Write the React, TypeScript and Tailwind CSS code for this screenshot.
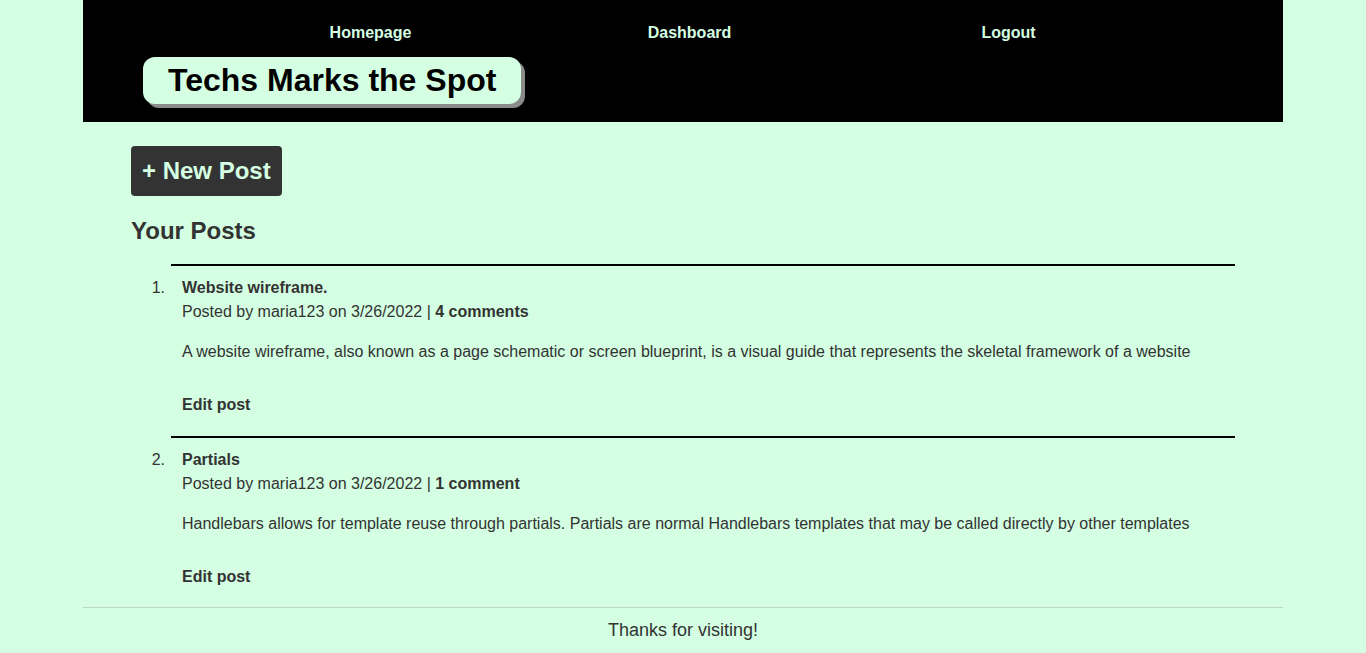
import React from 'react';

const posts = [
  {
    title: 'Website wireframe.',
    author: 'maria123',
    date: '3/26/2022',
    comments: '4 comments',
    body: 'A website wireframe, also known as a page schematic or screen blueprint, is a visual guide that represents the skeletal framework of a website',
  },
  {
    title: 'Partials',
    author: 'maria123',
    date: '3/26/2022',
    comments: '1 comment',
    body: 'Handlebars allows for template reuse through partials. Partials are normal Handlebars templates that may be called directly by other templates',
  },
];

export default function App() {
  return (
    <div className="min-h-[653px] bg-[#d4ffe2] font-['Liberation_Sans',Arial,sans-serif] text-[#333]">
      <div className="mx-auto w-[1200px]">
        <header className="h-[122px] bg-black pt-[22px]">
          <nav className="ml-[128px] grid w-[957px] grid-cols-3 text-center text-[16px] font-bold leading-[22px] text-[#d4ffe2]">
            <a>Homepage</a>
            <a>Dashboard</a>
            <a>Logout</a>
          </nav>
          <div className="ml-[60px] mt-[13px] inline-block rounded-[12px] bg-[#d4ffe2] px-[25px] shadow-[4px_4px_0_#8a8a8a]">
            <h1 className="text-[32px] font-bold leading-[47px] text-black">Techs Marks the Spot</h1>
          </div>
        </header>

        <main className="px-[48px] pt-[24px]">
          <button className="h-[50px] rounded-[4px] bg-[#333] px-[11px] text-[24px] font-bold text-[#d4ffe2]">
            + New Post
          </button>
          <h2 className="mt-[18px] text-[24px] font-bold leading-[34px]">Your Posts</h2>

          <ol className="mt-[16px]">
            {posts.map((p, i) => (
              <li key={p.title}>
                <div className="ml-[40px] h-[2px] bg-black" />
                <div className="flex pt-[10px]">
                  <span className="w-[36px] pr-[2px] text-right text-[16px] leading-[24px]">{i + 1}.</span>
                  <div className="ml-[15px] flex-1 text-[16px] leading-[24px]">
                    <div className="font-bold">{p.title}</div>
                    <div>
                      Posted by {p.author} on {p.date} | <span className="font-bold">{p.comments}</span>
                    </div>
                    <p className="mt-[16px]">{p.body}</p>
                    <div className={i === posts.length - 1 ? 'mt-[29px] pb-[18px] font-bold' : 'mt-[29px] pb-[19px] font-bold'}>
                      Edit post
                    </div>
                  </div>
                </div>
              </li>
            ))}
          </ol>
        </main>

        <footer className="border-t border-[#bcd8c4] pt-[10px] text-center text-[18px] leading-[24px]">
          Thanks for visiting!
        </footer>
      </div>
    </div>
  );
}
